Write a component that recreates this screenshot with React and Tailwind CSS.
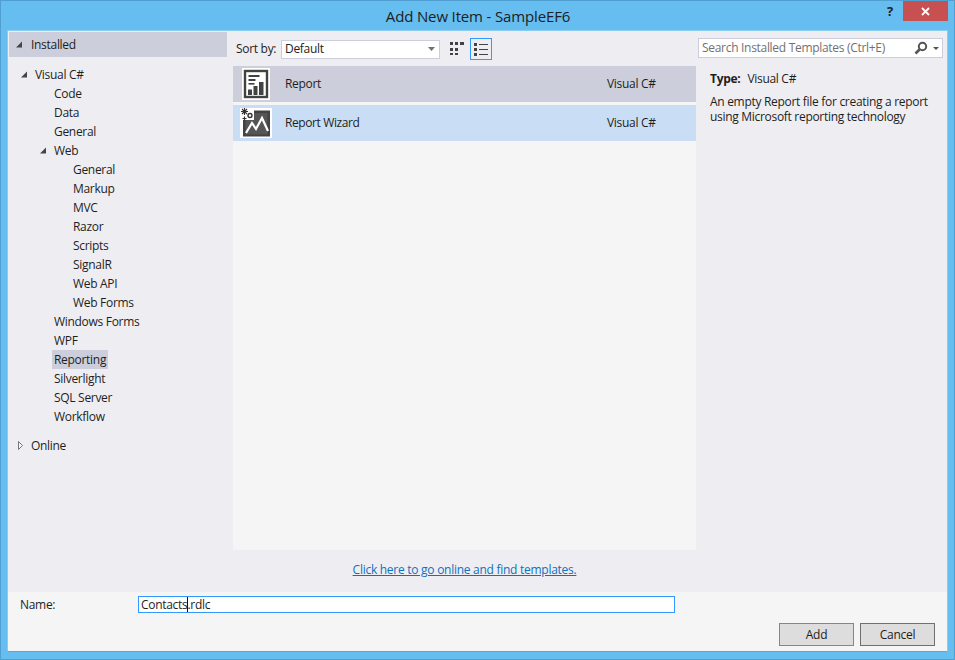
const font = { fontFamily: '"Open Sans", "Noto Sans", sans-serif' };

function Tri({ open = true, className = "" }) {
  return (
    <svg width="8" height="9" viewBox="0 0 8 9" className={"shrink-0 " + className}>
      {open ? (
        <path d="M7 1.5V7.5H1Z" fill="#444444" />
      ) : (
        <path d="M1.5 0.5L5.5 4.5L1.5 8.5Z" fill="#f5f5f5" stroke="#777777" />
      )}
    </svg>
  );
}

function Row({ indent, label, tri, selected }) {
  return (
    <div className="flex h-[19px] items-center" style={{ paddingLeft: indent }}>
      {tri ? <Tri className="ml-[-13px] mr-[5px]" /> : null}
      <span className={"px-[2px] leading-[19px] " + (selected ? "bg-[#cccedb]" : "")}>{label}</span>
    </div>
  );
}

function ReportIcon() {
  return (
    <svg width="28" height="32" viewBox="0 0 28 32" className="shrink-0">
      <rect width="28" height="32" fill="#ffffff" />
      <rect x="3" y="3" width="22" height="26" fill="none" stroke="#424242" strokeWidth="2.4" />
      <rect x="6.5" y="7" width="11" height="2" fill="#424242" />
      <rect x="6.5" y="11" width="7" height="2" fill="#424242" />
      <rect x="6.5" y="15" width="6" height="1.6" fill="#424242" />
      <rect x="6" y="21.5" width="4" height="5.5" fill="#424242" />
      <rect x="11.5" y="18" width="4" height="9" fill="#424242" />
      <rect x="17" y="14" width="4.5" height="13" fill="#424242" />
    </svg>
  );
}

function WizardIcon() {
  return (
    <svg width="32" height="30" viewBox="0 0 32 30" className="shrink-0">
      <rect x="0" y="0" width="32" height="30" fill="#ffffff" />
      <path d="M3 2.5H30V28.5H3Z" fill="#424242" />
      <path d="M5.5 5H27.5V26.5H5.5Z" fill="#555555" />
      <path d="M6 25L12 15L16 21L22 10L28 23" fill="none" stroke="#ffffff" strokeWidth="2.2" />
      <rect x="0" y="0" width="14" height="12" fill="#ffffff" />
      <path d="M1 3.5H8M4.5 0V7M2 1L7 6M7 1L2 6" stroke="#333333" strokeWidth="1.1" />
      <circle cx="10" cy="7.5" r="2" fill="#ffffff" stroke="#333333" strokeWidth="1.4" />
      <path d="M2.5 10.5H6.5M4.5 8.5V12.5" stroke="#333333" strokeWidth="1.2" />
    </svg>
  );
}

function GridIcon() {
  return (
    <svg width="15" height="14" viewBox="0 0 15 14" className="shrink-0">
      <path d="M0 0H3V3H0ZM5 0H8V3H5ZM10 0H14V3H10ZM0 6H3V9H0ZM5 6H8V9H5ZM0 11H3V13H0ZM5 11H8V13H5Z" fill="#424242" />
    </svg>
  );
}

function ListIcon() {
  return (
    <svg width="14" height="13" viewBox="0 0 14 13">
      <path d="M0 0H3V3H0ZM5 1H14V2H5ZM0 5H3V8H0ZM5 6H14V7H5ZM0 10H3V13H0ZM5 11H14V12H5Z" fill="#424242" />
    </svg>
  );
}

export default function App() {
  return (
    <div style={font} className="flex h-[660px] w-[955px] flex-col overflow-hidden border border-[#4f9fd0] bg-[#65bdf0] text-[12px] tracking-[-0.3px] text-[#1e1e1e]">
      <div className="relative flex h-[29px] shrink-0 items-center justify-center">
        <span className="pl-[1px] pt-[1px] text-[15px] tracking-[-0.15px] text-[#1e1e1e]">Add New Item - SampleEF6</span>
        <div className="absolute right-[6px] top-0 flex items-start">
          <span className="mr-[10px] mt-[1px] text-[13px] font-bold text-[#222222]">?</span>
          <div className="flex h-[20px] w-[45px] items-center justify-center bg-[#c75050]">
            <svg width="9" height="9" viewBox="0 0 9 9">
              <path d="M1 1L8 8M8 1L1 8" stroke="#ffffff" strokeWidth="1.8" />
            </svg>
          </div>
        </div>
      </div>

      <div className="mx-[6px] flex h-[622px] flex-col border border-[#8ccaf0] border-b-[#5aa8d8] bg-[#eeeef2]">
        <div className="flex h-[561px] shrink-0">
          <aside className="flex w-[219px] shrink-0 flex-col pl-[1px] pt-[1px]">
            <div className="flex h-[25px] items-center bg-[#cccedb] pl-[22px]">
              <Tri className="ml-[-16px] mr-[7px]" />
              <span className="pl-[1px]">Installed</span>
            </div>
            <div className="pt-[8px]">
              <Row indent={24} label="Visual C#" tri />
              <Row indent={43} label="Code" />
              <Row indent={43} label="Data" />
              <Row indent={43} label="General" />
              <Row indent={43} label="Web" tri />
              <Row indent={62} label="General" />
              <Row indent={62} label="Markup" />
              <Row indent={62} label="MVC" />
              <Row indent={62} label="Razor" />
              <Row indent={62} label="Scripts" />
              <Row indent={62} label="SignalR" />
              <Row indent={62} label="Web API" />
              <Row indent={62} label="Web Forms" />
              <Row indent={43} label="Windows Forms" />
              <Row indent={43} label="WPF" />
              <Row indent={43} label="Reporting" selected />
              <Row indent={43} label="Silverlight" />
              <Row indent={43} label="SQL Server" />
              <Row indent={43} label="Workflow" />
            </div>
            <div className="mt-[10px] flex h-[19px] items-center pl-[8px]">
              <Tri open={false} />
              <span className="pl-[6px]">Online</span>
            </div>
          </aside>

          <main className="flex w-[470px] shrink-0 flex-col pl-[6px]">
            <div className="flex h-[35px] items-center pt-[1px]">
              <span className="w-[48px] pl-[3px]">Sort by:</span>
              <div className="flex h-[19px] w-[159px] items-center justify-between border border-[#cccedb] bg-white pl-[3px] pr-[4px]">
                <span>Default</span>
                <svg width="7" height="4" viewBox="0 0 7 4"><path d="M0 0H7L3.5 4Z" fill="#717171" /></svg>
              </div>
              <div className="ml-[10px] flex h-[22px] w-[14px] items-center">
                <GridIcon />
              </div>
              <div className="ml-[6px] flex h-[22px] w-[22px] items-center justify-center border border-[#3399ff]">
                <ListIcon />
              </div>
            </div>
            <div className="flex h-[484px] w-[463px] flex-col bg-[#f5f5f5]">
              <div className="flex h-[36px] items-center bg-[#cccedb] pl-[9px]">
                <ReportIcon />
                <span className="ml-[15px] w-[322px]">Report</span>
                <span>Visual C#</span>
              </div>
              <div className="mt-[3px] flex h-[36px] items-center bg-[#c9def5] pl-[7px]">
                <WizardIcon />
                <span className="ml-[13px] w-[322px] tracking-[-0.4px]">Report Wizard</span>
                <span>Visual C#</span>
              </div>
            </div>
            <div className="flex w-[463px] flex-1 justify-center pt-[11px]">
              <span className="tracking-[-0.27px] text-[#0e70c0] underline">Click here to go online and find templates.</span>
            </div>
          </main>

          <section className="flex-1 pl-[1px] pr-[4px] pt-[7px]">
            <div className="flex h-[20px] items-center justify-between border border-[#cccedb] bg-white pl-[3px] pr-[3px]">
              <span className="text-[#717171]">Search Installed Templates (Ctrl+E)</span>
              <span className="flex items-center gap-[5px]">
                <svg width="14" height="14" viewBox="0 0 14 14">
                  <circle cx="8.5" cy="5.5" r="3.7" fill="none" stroke="#555555" strokeWidth="2" />
                  <path d="M5.5 8.5L1.5 12.5" stroke="#555555" strokeWidth="2.6" />
                </svg>
                <svg width="6" height="3" viewBox="0 0 6 3"><path d="M0 0H6L3 3Z" fill="#555555" /></svg>
              </span>
            </div>
            <div className="pl-[12px] pt-[12px]">
              <div className="flex h-[17px] items-center">
                <span className="font-bold">Type:</span>
                <span className="ml-[7px]">Visual C#</span>
              </div>
              <p className="mt-[7px] w-[228px] leading-[15px]">An empty Report file for creating a report using Microsoft reporting technology</p>
            </div>
          </section>
        </div>

        <footer className="flex flex-1 flex-col bg-[#f5f5f5]">
          <div className="flex h-[31px] items-start pl-[12px] pt-[4px]">
            <span className="w-[118px] leading-[17px]">Name:</span>
            <div className="relative flex h-[17px] w-[537px] items-center border border-[#3399ff] bg-white pl-[2px]">
              <span>Contacts.rdlc</span>
              <div className="absolute left-[48px] top-0 h-[15px] w-[1px] bg-[#111111]" />
            </div>
          </div>
          <div className="flex justify-end gap-[6px] pr-[12px]">
            <button className="h-[23px] w-[75px] border border-[#3399ff] bg-[#dddddd]">Add</button>
            <button className="h-[23px] w-[75px] border border-[#707070] bg-[#dddddd]">Cancel</button>
          </div>
        </footer>
      </div>
    </div>
  );
}
